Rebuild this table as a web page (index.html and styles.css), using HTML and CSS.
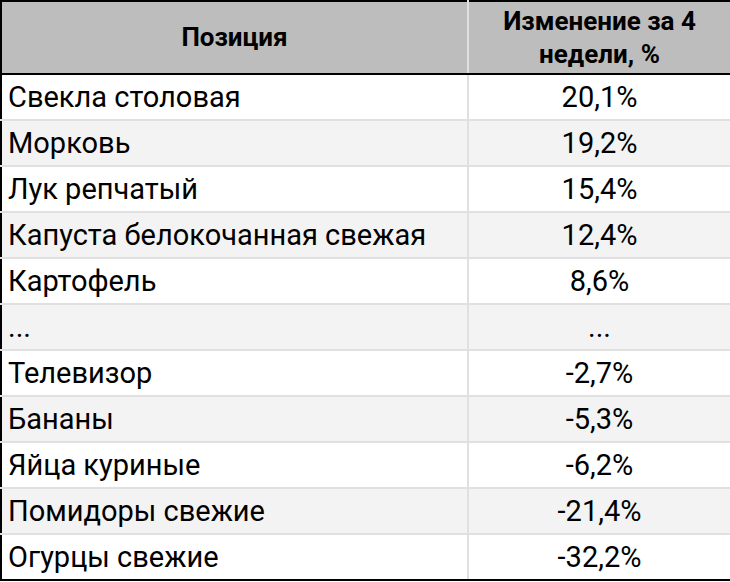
FILE: index.html
```html
<!DOCTYPE html>
<html lang="ru">
<head>
<meta charset="utf-8">
<link rel="stylesheet" href="styles.css">
</head>
<body>
<table class="tbl">
  <colgroup><col class="c1"><col class="c2"></colgroup>
  <thead>
    <tr class="head"><th>Позиция</th><th>Изменение за 4<br>недели, %</th></tr>
  </thead>
  <tbody>
    <tr><td>Свекла столовая</td><td class="num">20,1%</td></tr>
    <tr><td>Морковь</td><td class="num">19,2%</td></tr>
    <tr><td>Лук репчатый</td><td class="num">15,4%</td></tr>
    <tr><td>Капуста белокочанная свежая</td><td class="num">12,4%</td></tr>
    <tr><td>Картофель</td><td class="num">8,6%</td></tr>
    <tr><td>...</td><td class="num">...</td></tr>
    <tr><td>Телевизор</td><td class="num">-2,7%</td></tr>
    <tr><td>Бананы</td><td class="num">-5,3%</td></tr>
    <tr><td>Яйца куриные</td><td class="num">-6,2%</td></tr>
    <tr><td>Помидоры свежие</td><td class="num">-21,4%</td></tr>
    <tr><td>Огурцы свежие</td><td class="num">-32,2%</td></tr>
  </tbody>
</table>
</body>
</html>
```
FILE: styles.css
```css
html, body {
  margin: 0;
  padding: 0;
  background: #ffffff;
}
.tbl {
  width: 730px;
  border-collapse: collapse;
  table-layout: fixed;
  font-family: Roboto, "Liberation Sans", sans-serif;
  color: #000;
}
.c1 { width: 467px; }
.c2 { width: 263px; }
.tbl th, .tbl td {
  border: 2px solid #e0e0e0;
  padding: 0 6px;
}
.head th {
  background: #bdbdbd;
  font-weight: 700;
  font-size: 26px;
  line-height: 33px;
  height: 71px;
  text-align: center;
  border-top: 2px solid #000;
  border-bottom: 2px solid #000;
}
.tbl th:first-child, .tbl td:first-child { border-left: 2px solid #000; }
.tbl th:last-child, .tbl td:last-child { border-right: 2px solid #000; }
.tbl tbody tr:last-child td { border-bottom: 2px solid #000; }
.tbl td {
  font-size: 29px;
  height: 44px;
  line-height: 32px;
  text-align: left;
}
.tbl td.num { text-align: center; }
.tbl tbody tr:nth-child(even) td { background: #f3f3f3; }
```
